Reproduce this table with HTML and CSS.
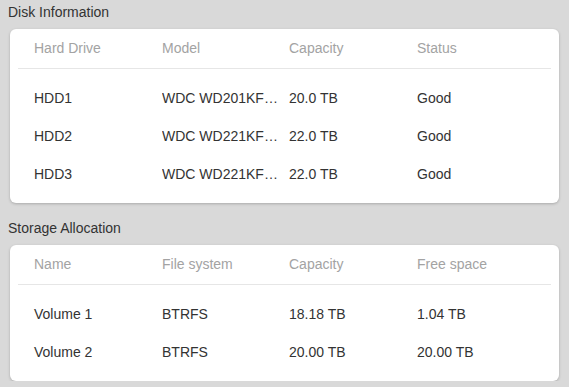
FILE: index.html
```html
<!DOCTYPE html>
<html lang="en">
<head>
  <meta charset="UTF-8" />
  <meta name="viewport" content="width=device-width, initial-scale=1.0"/>
  <title>Storage</title>
  <link rel="stylesheet" href="styles.css">
</head>
<body>

  <h2 class="section-title">Disk Information</h2>
  <div class="card">
    <div class="row head">
      <div class="cell">Hard Drive</div>
      <div class="cell">Model</div>
      <div class="cell">Capacity</div>
      <div class="cell">Status</div>
    </div>
    <div class="rows">
      <div class="row">
        <div class="cell">HDD1</div>
        <div class="cell"><span class="clip">WDC WD201KFGX-68BKJN0</span></div>
        <div class="cell">20.0 TB</div>
        <div class="cell">Good</div>
      </div>
      <div class="row">
        <div class="cell">HDD2</div>
        <div class="cell"><span class="clip">WDC WD221KFGX-68B9KN0</span></div>
        <div class="cell">22.0 TB</div>
        <div class="cell">Good</div>
      </div>
      <div class="row">
        <div class="cell">HDD3</div>
        <div class="cell"><span class="clip">WDC WD221KFGX-68B9KN0</span></div>
        <div class="cell">22.0 TB</div>
        <div class="cell">Good</div>
      </div>
    </div>
  </div>

  <h2 class="section-title">Storage Allocation</h2>
  <div class="card">
    <div class="row head">
      <div class="cell">Name</div>
      <div class="cell">File system</div>
      <div class="cell">Capacity</div>
      <div class="cell">Free space</div>
    </div>
    <div class="rows">
      <div class="row">
        <div class="cell">Volume 1</div>
        <div class="cell">BTRFS</div>
        <div class="cell">18.18 TB</div>
        <div class="cell">1.04 TB</div>
      </div>
      <div class="row">
        <div class="cell">Volume 2</div>
        <div class="cell">BTRFS</div>
        <div class="cell">20.00 TB</div>
        <div class="cell">20.00 TB</div>
      </div>
    </div>
  </div>

</body>
</html>
```

FILE: styles.css
```css
* {
  box-sizing: border-box;
  margin: 0;
  padding: 0;
}

body {
  background-color: #d9d9d9;
  color: #333;
  font-family: "Liberation Sans", Arial, sans-serif;
  font-size: 14px;
  padding: 2px 10px 0;
}

.section-title {
  font-size: 14px;
  font-weight: normal;
  line-height: 20px;
  margin: 0 0 7px -2px;
}

.card + .section-title {
  margin-top: 15px;
}

.card {
  background-color: white;
  border-radius: 6px;
  box-shadow: 0 1px 3px rgba(0, 0, 0, 0.22);
  padding: 0 8px;
}

.row {
  display: grid;
  grid-template-columns: 128px 127px 128px 1fr;
  align-items: center;
  height: 38px;
  padding-left: 16px;
}

.row.head {
  height: 40px;
  padding-bottom: 1px;
  color: #a3a3a3;
  border-bottom: 1px solid #e6e6e6;
}

.rows {
  padding: 10px 0;
}

.cell {
  min-width: 0;
  white-space: nowrap;
}

.clip {
  display: block;
  width: 118px;
  overflow: hidden;
  text-overflow: ellipsis;
}
```
